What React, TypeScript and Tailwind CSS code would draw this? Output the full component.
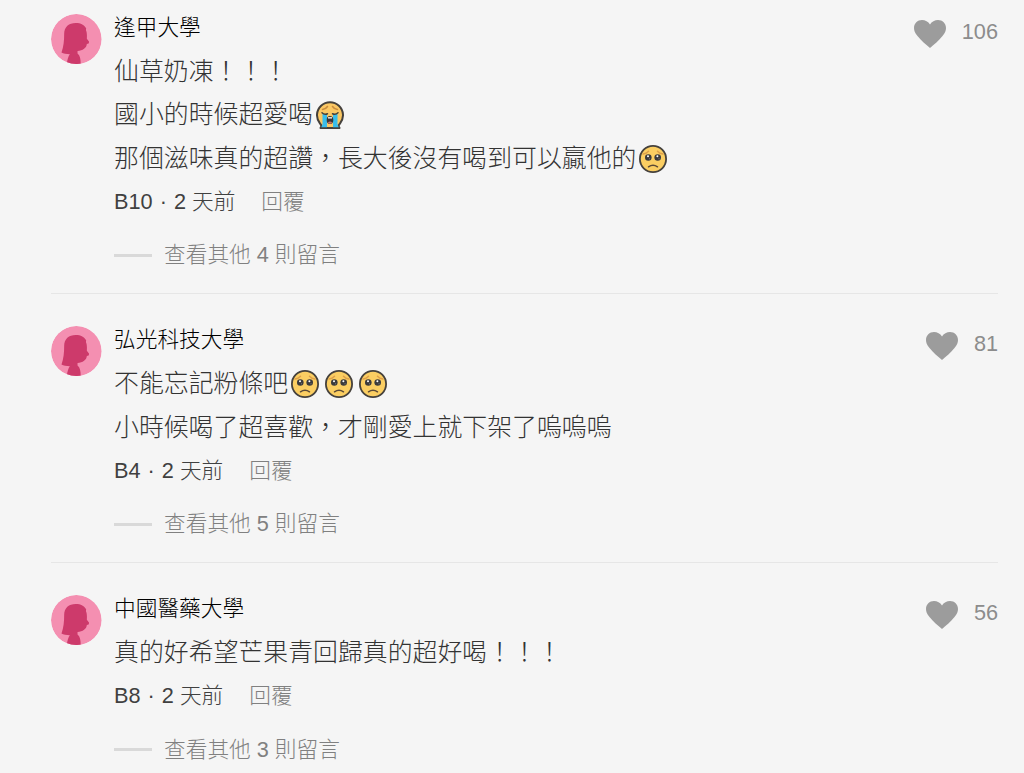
import React from 'react';

interface CommentData {
  school: string;
  lines: string[];
  floor: string;
  likes: number;
  replies: number;
}

const comments: CommentData[] = [
  {
    school: '逢甲大學',
    lines: ['仙草奶凍！！！', '國小的時候超愛喝😭', '那個滋味真的超讚，長大後沒有喝到可以贏他的🥺'],
    floor: 'B10',
    likes: 106,
    replies: 4,
  },
  {
    school: '弘光科技大學',
    lines: ['不能忘記粉條吧🥺🥺🥺', '小時候喝了超喜歡，才剛愛上就下架了嗚嗚嗚'],
    floor: 'B4',
    likes: 81,
    replies: 5,
  },
  {
    school: '中國醫藥大學',
    lines: ['真的好希望芒果青回歸真的超好喝！！！'],
    floor: 'B8',
    likes: 56,
    replies: 3,
  },
];

const Avatar = () => (
  <svg viewBox="0 0 51 51" className="h-[50.5px] w-[50.5px] shrink-0 rounded-full">
    <circle cx="25.5" cy="25.5" r="25.5" fill="#f48fb1" />
    <path
      d="M13.300 20C13.300 13 18 9 25 9C30 9 34 11 35.500 14.700L35.300 16.500C36.500 19 36.300 22 36.200 25L38.500 28L38 29.800L36.200 30.200C36 34 32 37 26.800 37.300L26.800 40C29.500 42 30 46 30 51C25 51.500 20 51 16 50C16.500 46 17.500 43 19 40.700C15.500 40.500 12.500 40 10.600 39C12.800 33 13.300 27 13.300 20z"
      fill="#cd3a6b"
    />
  </svg>
);

const HeartIcon = () => (
  <svg viewBox="0 0 32 28" className="mt-1 h-[28px] w-[32px]" fill="#9c9c9c">
    <path d="M16 28C12 24.500 7 20.500 3.500 16 .8 12.500 0 10.500 0 8c0-4.500 3.500-8 8-8 3.200 0 6.300 1.700 8 4.500C17.700 1.700 20.800 0 24 0c4.500 0 8 3.500 8 8 0 2.500-.8 4.500-3.500 8C25 20.500 20 24.500 16 28z" />
  </svg>
);

const PleadingFace = () => (
  <svg viewBox="0 0 28 28" className="mx-[3px] inline-block h-7 w-7 align-[-6px]">
    <circle cx="14" cy="14" r="13.100" fill="#fbce62" stroke="#45413c" strokeWidth="1.800" />
    <path d="M4 9Q7.500 8.500 9.500 6.200M24 9Q20.500 8.500 18.500 6.200" fill="none" stroke="#dea04a" strokeWidth="1.500" strokeLinecap="round" />
    <circle cx="9.300" cy="12.500" r="3.300" fill="#3b3a3c" />
    <circle cx="18.700" cy="12.500" r="3.300" fill="#3b3a3c" />
    <circle cx="9" cy="11.200" r="1" fill="#fff" />
    <circle cx="18.400" cy="11.200" r="1" fill="#fff" />
    <circle cx="10.600" cy="13.800" r=".5" fill="#999" />
    <circle cx="20" cy="13.800" r=".5" fill="#999" />
    <path d="M9.500 21.800Q14 18.600 18.500 21.800" fill="none" stroke="#5c4a36" strokeWidth="1.500" strokeLinecap="round" />
  </svg>
);

const CryingFace = () => (
  <svg viewBox="0 0 28 28" className="mx-[3px] inline-block h-7 w-7 align-[-6px]">
    <path d="M4.500 27C6 25.500 5 23.500 4 22.500A13 13 0 1 1 24 22.500C23 23.500 22 25.500 23.500 27z" fill="#fbc864" stroke="#45413c" strokeWidth="2" strokeLinejoin="round" />
    <path d="M6.500 8.500Q10 8 11.500 5.500M21.500 8.500Q18 8 16.500 5.500" fill="none" stroke="#c98d3f" strokeWidth="1.500" strokeLinecap="round" />
    <path d="M6.500 13h4.500v13.200H5.300Q7.200 23.500 6.500 20zM17 13h4.500v7q-.7 3.500 1.200 6.200H17z" fill="#39bdea" />
    <path d="M6 11.800Q8.500 14.200 11.500 12.800M22 11.800Q19.500 14.200 16.500 12.800" fill="none" stroke="#45413c" strokeWidth="1.500" strokeLinecap="round" />
    <ellipse cx="14" cy="19" rx="3.300" ry="4" fill="#3b3535" />
    <path d="M12 16.200h4v1.300h-4z" fill="#fff" />
    <path d="M11.800 21.500Q14 19.500 16.200 21.500Q14 24 11.800 21.500z" fill="#c96f6d" />
  </svg>
);

const renderLine = (line: string) =>
  Array.from(line).map((char, i) => {
    if (char === '🥺') return <PleadingFace key={i} />;
    if (char === '😭') return <CryingFace key={i} />;
    return char;
  });

const Comment: React.FC<{ comment: CommentData }> = ({ comment }) => (
  <article className="flex items-start border-b border-[#e6e6e6] pt-[31.6px] pb-6">
    <Avatar />
    <div className="ml-[12.5px] min-w-0 flex-1">
      <div className="flex items-start justify-between">
        <h3 className="h-7 text-[21.7px] leading-7 text-black">{comment.school}</h3>
        <div className="flex h-7 items-start gap-4 pt-0.5 text-[#8c8c8c]">
          <HeartIcon />
          <span className="text-[21.7px] leading-[31px]">{comment.likes}</span>
        </div>
      </div>
      <div className="mt-[8.3px] text-[24.87px] text-[#333]">
        {comment.lines.map((line) => (
          <p key={line} className="h-[43.5px] leading-[43.5px] whitespace-nowrap">{renderLine(line)}</p>
        ))}
      </div>
      <div className="mt-[7.6px] flex h-7 text-[21.7px] leading-7 text-[#404040]">
        <span>
          {comment.floor} <span className="mx-px">·</span> 2 天前
        </span>
        <button className="ml-[26px] text-[#808080]">回覆</button>
      </div>
      <button className="mt-[25.4px] flex h-7 items-center text-[21.7px] leading-7 text-[#808080]">
        <span className="mr-[12.5px] -ml-[0.5px] h-[3px] w-[38px] bg-[#d9d9d9]" />
        查看其他 {comment.replies} 則留言
      </button>
    </div>
  </article>
);

export default function App() {
  return (
    <main className="h-[773px] overflow-hidden bg-[#f5f5f5] pr-[26px] pl-[51px] font-['Liberation_Sans','Noto_Sans_CJK_TC',sans-serif] font-light">
      <div className="-mt-[18.1px]">
        {comments.map((comment) => (
          <Comment key={comment.floor} comment={comment} />
        ))}
      </div>
    </main>
  );
}
